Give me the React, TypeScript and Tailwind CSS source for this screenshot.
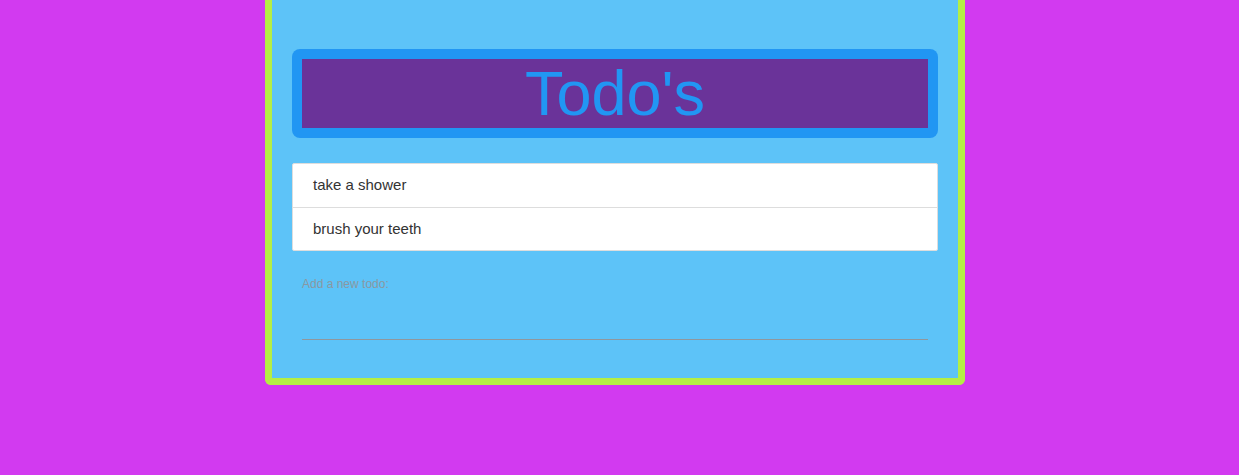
import React, { useState } from 'react';

export default function App() {
    const [todos] = useState(['take a shower', 'brush your teeth']);
    const [text, setText] = useState('');

    return (
        <div className="min-h-[475px] w-full bg-[#d23af0] font-['Liberation_Sans',Arial,sans-serif]">
            <div className="ml-[265px] w-[700px] rounded-b-[6px] border-x-[7px] border-b-[7px] border-[#b5ee45] bg-[#5dc3f8] px-[20px] pt-[49px] pb-[38px]">
                <div className="rounded-[8px] bg-[#2196f3] p-[10px]">
                    <h1 className="flex h-[69px] items-center justify-center bg-[#6a3399] text-[63px] leading-none text-[#2196f3]">
                        Todo's
                    </h1>
                </div>

                <ul className="mt-[25px] rounded-[2px] border border-[#dddddd] bg-white">
                    {todos.map((todo, i) => (
                        <li
                            key={todo}
                            className={
                                'flex h-[43px] items-center px-[20px] text-[15px] text-[#333333] ' +
                                (i > 0 ? 'border-t border-[#dddddd]' : '')
                            }
                        >
                            {todo}
                        </li>
                    ))}
                </ul>

                <div className="mx-[10px] mt-[26px]">
                    <label
                        htmlFor="todo"
                        className="block text-[12px] leading-[14px] text-[#8a98a2]"
                    >
                        Add a new todo:
                    </label>
                    <input
                        id="todo"
                        value={text}
                        onChange={(e) => setText(e.target.value)}
                        className="mt-[13px] block h-[35px] w-full border-0 bg-transparent text-[15px] outline-none"
                    />
                    <div className="h-[1px] w-full bg-[#8f979d]" />
                </div>
            </div>
        </div>
    );
}
